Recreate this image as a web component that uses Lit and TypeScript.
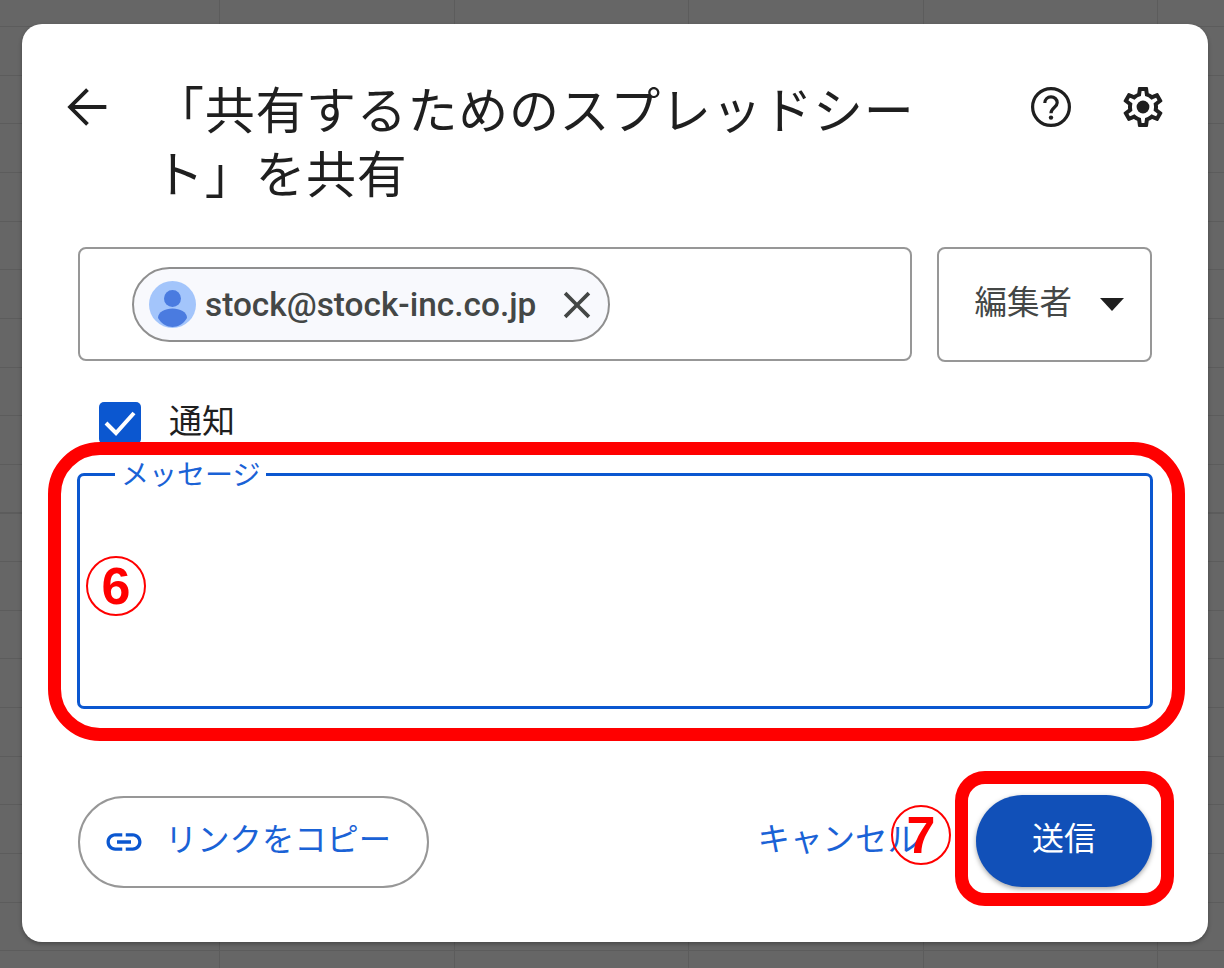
import { LitElement, html, css } from "lit";
import { customElement } from "lit/decorators.js";

@customElement("app-root")
export class AppRoot extends LitElement {
  static styles = css`
    :host {
      display: block;
      position: relative;
      width: 1224px;
      height: 968px;
      box-sizing: border-box;
      padding: 24px 16px 26px 22px;
      overflow: hidden;
      font-family: "Noto Sans CJK JP", "Noto Sans", sans-serif;
      background-color: #666;
      background-image:
        repeating-linear-gradient(90deg, transparent 0 219px, #5c5c5c 219px 220px, transparent 220px 234.5px),
        repeating-linear-gradient(180deg, transparent 0 26px, #5c5c5c 26px 27px, transparent 27px 48.65px);
    }
    .dialog {
      height: 100%;
      box-sizing: border-box;
      background: #fff;
      border-radius: 20px;
      box-shadow: 0 2px 4px rgba(0, 0, 0, 0.3);
      padding: 54px 56px 0 56px;
      display: flex;
      flex-direction: column;
    }
    .head { display: flex; align-items: flex-start; height: 137px; flex: none; }
    .back { width: 58px; height: 58px; margin: 0 38px 0 -20px; flex: none; }
    .title {
      width: 780px;
      margin: -3px 0 0;
      font-size: 50px;
      font-weight: 400;
      line-height: 64px;
      letter-spacing: 0.7px;
      color: #1f1f1f;
      word-break: break-all;
    }
    .head-icons { margin-left: auto; margin-right: -14.5px; margin-top: 5px; display: flex; gap: 43.5px; }
    .head-icons svg { width: 48px; height: 48px; display: block; }
    .fields { display: flex; gap: 25px; margin-top: 32px; align-items: flex-start; flex: none; }
    .to {
      width: 834px;
      height: 114px;
      box-sizing: border-box;
      border: 2px solid #979797;
      border-radius: 8px;
      padding: 18px 0 0 52px;
    }
    .chip {
      width: 478px;
      height: 75px;
      box-sizing: border-box;
      border: 2px solid #8f8f8f;
      border-radius: 38px;
      background: #f8f9fd;
      display: flex;
      align-items: center;
      padding-left: 15px;
    }
    .avatar { width: 47px; height: 47px; flex: none; }
    .addr {
      margin-left: 9px;
      font-family: Roboto, sans-serif;
      font-weight: 500;
      font-size: 33.400px;
      color: #444746;
      white-space: nowrap;
    }
    .x { width: 48px; height: 48px; margin-left: 17px; flex: none; }
    .role {
      width: 215px;
      height: 115px;
      box-sizing: border-box;
      border: 2px solid #979797;
      border-radius: 8px;
      padding: 25px 0 0 35.500px;
      display: flex;
      align-items: flex-start;
      font-size: 32.500px;
      line-height: 52px;
      color: #444746;
    }
    .caret { width: 0; height: 0; margin: 24px 0 0 28px; border: 12px solid transparent; border-top: 13px solid #1f1f1f; border-bottom: 0; }
    .notify { display: flex; align-items: center; margin: 40px 0 0 21px; height: 42px; flex: none; font-size: 33px; line-height: 42px; color: #1f1f1f; }
    .check { width: 42px; height: 42px; border-radius: 5px; background: #0b57d0; margin-right: 28px; flex: none; }
    .check svg { display: block; width: 42px; height: 42px; }
    .lift { padding-bottom: 8px; }
    .lift-more { padding-bottom: 10px; }
    .message {
      position: relative;
      margin: 29px 0 0 -1px;
      width: 1076px;
      height: 236px;
      flex: none;
      box-sizing: border-box;
      border: 3px solid #0b57d0;
      border-radius: 7px;
    }
    .legend {
      position: absolute;
      left: 35px;
      top: -22px;
      padding: 0 6px;
      background: #fff;
      color: #1a62d6;
      font-size: 28px;
      line-height: 38px;
      white-space: nowrap;
    }
    .actions { display: flex; align-items: flex-start; margin-top: 87px; flex: none; }
    .copy {
      width: 351px;
      height: 92px;
      box-sizing: border-box;
      border: 2px solid #979797;
      border-radius: 47px;
      display: flex;
      align-items: center;
      padding-left: 23px;
      color: #1a62d6;
      font-size: 32.300px;
      white-space: nowrap;
    }
    .copy svg { width: 42px; height: 42px; margin-right: 20px; flex: none; }
    .cancel {
      margin-left: auto;
      color: #1a62d6;
      font-size: 32.500px;
      line-height: 82px;
      white-space: nowrap;
    }
    .send {
      margin-left: 56px;
      margin-top: -1px;
      width: 176px;
      height: 92px;
      border-radius: 46px;
      background: #1150b8;
      color: #fff;
      font-size: 32px;
      display: flex;
      align-items: center;
      justify-content: center;
      box-shadow: 0 2px 5px rgba(0, 0, 0, 0.35);
    }
    .mark { position: absolute; box-sizing: border-box; border: 13px solid #ff0000; background: transparent; }
    .mark-msg { left: 48px; top: 442px; width: 1137px; height: 299px; border-radius: 52px; }
    .mark-send { left: 955px; top: 771px; width: 219px; height: 135px; border-radius: 30px; }
    .num {
      position: absolute;
      box-sizing: border-box;
      width: 60px;
      height: 60px;
      border: 2px solid #ff0000;
      border-radius: 50%;
      color: #ff0000;
      font-family: "Liberation Sans", Arial, sans-serif;
      font-weight: 700;
      font-size: 52px;
      line-height: 56px;
      text-align: center;
    }
    .num-6 { left: 86px; top: 556px; }
    .num-7 { left: 891px; top: 805px; }
  `;

  render() {
    return html`
      <div class="dialog">
        <div class="head">
          <svg class="back" viewBox="0 0 24 24" fill="none" stroke="#1f1f1f" stroke-width="1.600"><path d="M20 12H5.500M12.200 4.800 5 12l7.200 7.200"/></svg>
          <h1 class="title">「共有するためのスプレッドシート」を共有</h1>
          <div class="head-icons">
            <svg viewBox="0 0 24 24" fill="none" stroke="#1f1f1f" stroke-width="1.600">
              <circle cx="12" cy="12" r="9.200"/>
              <path d="M8.900 10c0-1.800 1.400-3.100 3.100-3.100s3.100 1.300 3.100 3c0 2.300-3.100 2.500-3.100 5.200"/>
              <circle cx="12" cy="17.300" r="1.100" fill="#1f1f1f" stroke="none"/>
            </svg>
            <svg viewBox="0 0 24 24" fill="#1f1f1f"><path d="M19.430 12.980c.04-.32.07-.64.07-.98s-.03-.66-.07-.98l2.110-1.650c.19-.15.24-.42.12-.64l-2-3.460c-.12-.22-.39-.3-.61-.22l-2.490 1c-.52-.4-1.080-.73-1.690-.98l-.38-2.650A.49.49 0 0 0 14 2h-4c-.25 0-.46.18-.49.42l-.38 2.650c-.61.25-1.170.59-1.690.98l-2.490-1c-.23-.09-.49 0-.61.22l-2 3.460c-.13.22-.07.49.12.64l2.110 1.650c-.04.32-.07.65-.07.98s.03.66.07.98l-2.110 1.650c-.19.15-.24.42-.12.64l2 3.460c.12.22.39.3.61.22l2.490-1c.52.4 1.080.73 1.690.98l.38 2.650c.03.24.24.42.49.42h4c.25 0 .46-.18.49-.42l.38-2.650c.61-.25 1.170-.59 1.690-.98l2.490 1c.23.09.49 0 .61-.22l2-3.460c.12-.22.07-.49-.12-.64l-2.110-1.650zM17.450 11.270c.04.31.05.52.05.73s-.02.43-.05.73l-.14 1.130.89.7 1.080.84-.7 1.210-1.270-.51-1.040-.42-.9.68c-.43.32-.84.56-1.250.73l-1.060.43-.16 1.130-.2 1.350h-1.400l-.19-1.350-.16-1.130-1.060-.43c-.43-.18-.83-.41-1.230-.71l-.91-.7-1.060.43-1.270.51-.7-1.210 1.080-.84.89-.7-.14-1.130c-.03-.31-.05-.54-.05-.74s.02-.43.05-.73l.14-1.130-.89-.7-1.080-.84.7-1.210 1.270.51 1.040.42.9-.68c.43-.32.84-.56 1.250-.73l1.060-.43.16-1.130.2-1.350h1.390l.19 1.350.16 1.130 1.060.43c.43.18.83.41 1.230.71l.91.7 1.060-.43 1.270-.51.7 1.210-1.070.85-.89.7.14 1.130z"/><circle cx="12" cy="12" r="3.200"/></svg>
          </div>
        </div>
        <div class="fields">
          <div class="to">
            <div class="chip">
              <svg class="avatar" viewBox="0 0 47 47">
                <circle cx="23.500" cy="23.500" r="23.500" fill="#a3c5fb"/>
                <circle cx="23.500" cy="17.500" r="8.500" fill="#4a7be0"/>
                <path d="M9 37c0-6 7-9.500 14.500-9.500S38 31 38 37c-3.500 6-9 9-14.500 9S12.500 43 9 37z" fill="#4a7be0"/>
              </svg>
              <span class="addr">stock@stock-inc.co.jp</span>
              <svg class="x" viewBox="0 0 24 24" fill="#444746"><path d="M18.600 6.700 17.300 5.400 12 10.700 6.700 5.400 5.400 6.700 10.700 12 5.400 17.300 6.700 18.600 12 13.300 17.300 18.600 18.600 17.300 13.300 12z"/></svg>
            </div>
          </div>
          <div class="role">編集者<span class="caret"></span></div>
        </div>
        <div class="notify">
          <span class="check"><svg viewBox="0 0 42 42"><path d="M7 21l10 10L35 11" fill="none" stroke="#fff" stroke-width="4"/></svg></span>
          <span class="lift">通知</span>
        </div>
        <div class="message"><span class="legend">メッセージ</span></div>
        <div class="actions">
          <div class="copy">
            <svg viewBox="0 0 24 24" fill="#0b57d0"><path d="M3.900 12c0-1.710 1.390-3.100 3.100-3.100h4V7H7c-2.760 0-5 2.240-5 5s2.240 5 5 5h4v-1.900H7c-1.710 0-3.100-1.390-3.100-3.100zM8 13h8v-2H8v2zm9-6h-4v1.900h4c1.710 0 3.100 1.390 3.100 3.100s-1.390 3.100-3.100 3.100h-4V17h4c2.760 0 5-2.240 5-5s-2.240-5-5-5z"/></svg>
            <span class="lift-more">リンクをコピー</span>
          </div>
          <div class="cancel">キャンセル</div>
          <div class="send"><span class="lift-more">送信</span></div>
        </div>
      </div>
      <div class="mark mark-msg"></div>
      <div class="mark mark-send"></div>
      <div class="num num-6">6</div>
      <div class="num num-7">7</div>
    `;
  }
}
